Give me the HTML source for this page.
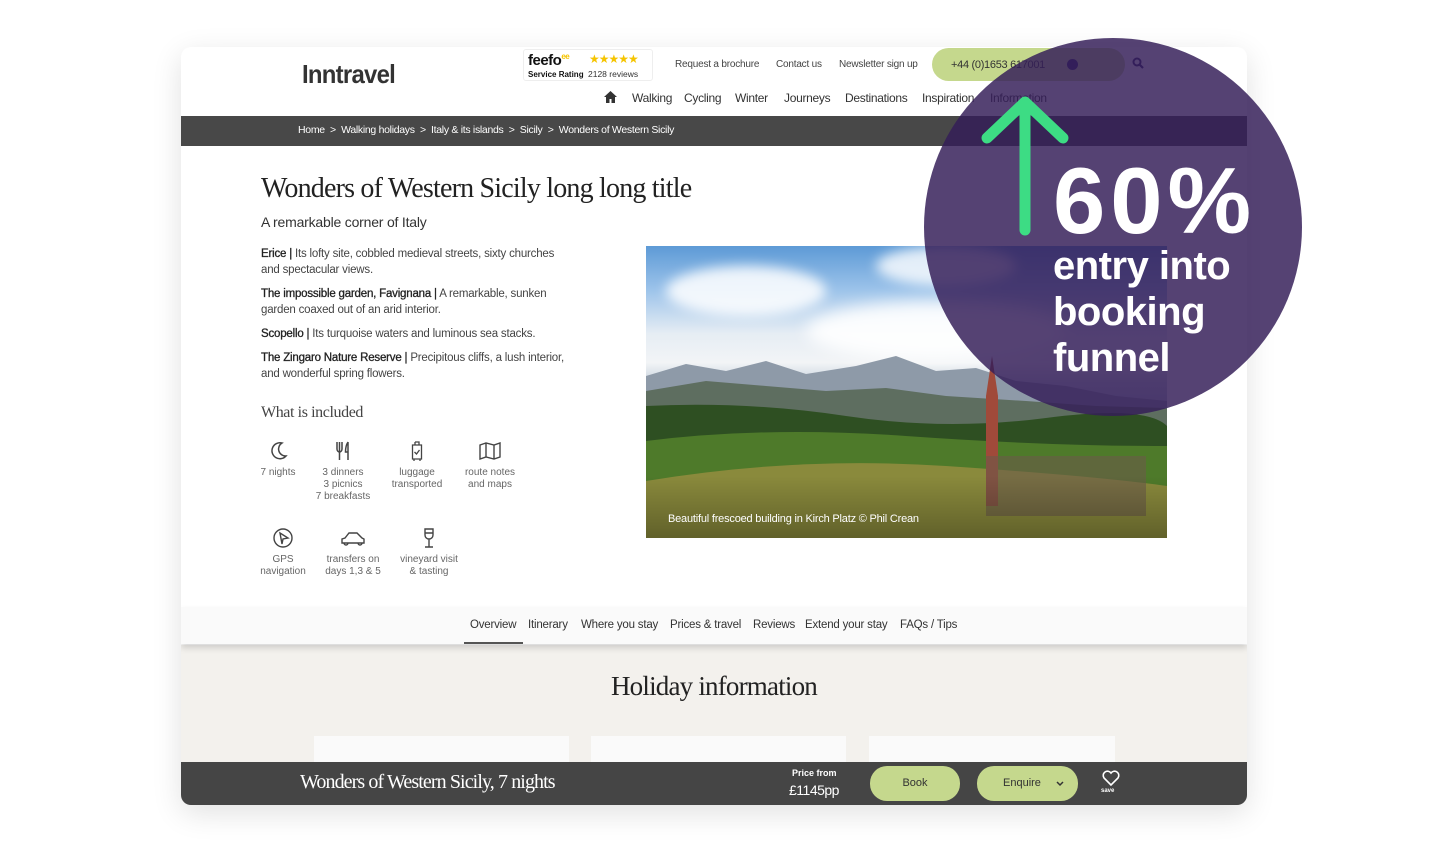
<!DOCTYPE html>
<html><head><meta charset="utf-8"><style>
*{margin:0;padding:0;box-sizing:border-box}
body{width:1429px;height:855px;background:#fff;position:relative;overflow:hidden;font-family:"Liberation Sans",sans-serif;color:#333}
.a{position:absolute}
.card{left:181px;top:47px;width:1066px;height:758px;background:#fff;border-radius:10px;box-shadow:0 8px 30px rgba(0,0,0,0.12);overflow:hidden}
.serif{font-family:"Liberation Serif",serif}
.nav{font-size:12px;color:#333}
.ic{text-align:center;font-size:10px;color:#666;line-height:12px}
.ic svg{display:block;margin:0 auto 5px}
p.t{font-size:11.5px;line-height:16px;color:#444;margin-bottom:8px;letter-spacing:-0.2px}
p.t b{color:#222;font-weight:normal;-webkit-text-stroke:0.3px #222}
.tab{font-size:11.5px;color:#333;letter-spacing:-0.2px}
</style></head><body>
<div class="a card">
 <div class="a" style="left:0;top:598px;width:1066px;height:160px;background:#f3f1ed"></div>
 <div class="a" style="left:121px;top:12px;font-size:26px;font-weight:bold;color:#333;letter-spacing:-0.8px;transform:scaleX(0.92);transform-origin:left">Inntravel</div>
 <div class="a" style="left:342px;top:2px;width:130px;height:32px;border:1px solid #eee;border-radius:3px;background:#fff">
  <div class="a" style="left:4px;top:2px;font-size:15px;font-weight:bold;color:#111;letter-spacing:-0.5px">feefo<span style="color:#f5c400;font-size:8px;vertical-align:top">ee</span></div>
  <div class="a" style="left:65px;top:2px;font-size:12px;color:#f5c400;letter-spacing:-1px">★★★★★</div>
  <div class="a" style="left:4px;top:20px;font-size:8px;font-weight:bold;color:#111">Service Rating</div>
  <div class="a" style="left:64px;top:19px;font-size:8.5px;color:#333">2128 reviews</div>
 </div>
 <div class="a" style="left:494px;top:12px;font-size:10px;color:#444;letter-spacing:-0.2px">Request a brochure</div>
 <div class="a" style="left:595px;top:12px;font-size:10px;color:#444;letter-spacing:-0.2px">Contact us</div>
 <div class="a" style="left:658px;top:12px;font-size:10px;color:#444;letter-spacing:-0.2px">Newsletter sign up</div>
 <div class="a" style="left:751px;top:1px;width:193px;height:33px;border-radius:17px;background:#c5d88d"></div>
 <div class="a" style="left:770px;top:12px;font-size:11px;color:#333;letter-spacing:-0.3px">+44 (0)1653 617001</div>
 <div class="a" style="left:886px;top:12px;width:11px;height:11px;border-radius:50%;background:#2c2366"></div>
 <svg class="a" style="left:951px;top:10px" width="12" height="12" viewBox="0 0 12 12"><circle cx="5" cy="5" r="3.5" fill="none" stroke="#2c2366" stroke-width="2"/><path d="M7.5 7.5L11 11" stroke="#2c2366" stroke-width="2.2"/></svg>
 <svg class="a" style="left:423px;top:44px" width="13" height="12" viewBox="0 0 13 12"><path d="M6.5 0L0 6h2v6h3.5V8h2v4H11V6h2z" fill="#333"/></svg>
 <div class="a nav" style="left:451px;top:44px;letter-spacing:-0.3px">Walking</div>
 <div class="a nav" style="left:503px;top:44px;letter-spacing:-0.3px">Cycling</div>
 <div class="a nav" style="left:554px;top:44px;letter-spacing:-0.3px">Winter</div>
 <div class="a nav" style="left:603px;top:44px;letter-spacing:-0.3px">Journeys</div>
 <div class="a nav" style="left:664px;top:44px;letter-spacing:-0.3px">Destinations</div>
 <div class="a nav" style="left:741px;top:44px;letter-spacing:-0.3px">Inspiration</div>
 <div class="a nav" style="left:809px;top:44px;letter-spacing:-0.3px">Information</div>
 <div class="a" style="left:0;top:69px;width:1066px;height:30px;background:#484848"></div>
 <div class="a" style="left:117px;top:77px;font-size:10.5px;color:#fff;letter-spacing:-0.3px">Home &nbsp;&gt;&nbsp; Walking holidays &nbsp;&gt;&nbsp; Italy &amp; its islands &nbsp;&gt;&nbsp; Sicily &nbsp;&gt;&nbsp; Wonders of Western Sicily</div>

 <div class="a serif" style="left:80px;top:126px;font-size:28px;color:#222;letter-spacing:-0.8px">Wonders of Western Sicily long long title</div>
 <div class="a" style="left:80px;top:167px;font-size:14px;color:#333;letter-spacing:-0.2px">A remarkable corner of Italy</div>
 <div class="a" style="left:80px;top:199px;width:310px">
  <p class="t"><b>Erice |</b> Its lofty site, cobbled medieval streets, sixty churches and spectacular views.</p>
  <p class="t"><b>The impossible garden, Favignana |</b> A remarkable, sunken garden coaxed out of an arid interior.</p>
  <p class="t"><b>Scopello |</b> Its turquoise waters and luminous sea stacks.</p>
  <p class="t"><b>The Zingaro Nature Reserve |</b> Precipitous cliffs, a lush interior, and wonderful spring flowers.</p>
 </div>
 <div class="a serif" style="left:80px;top:357px;font-size:16px;color:#444;letter-spacing:-0.4px">What is included</div>
 <div class="a ic" style="left:70px;top:393px;width:54px"><svg width="22" height="22" viewBox="0 0 22 22"><path d="M15 3A8 8 0 1 0 19 16A7 7 0 0 1 15 3z" fill="none" stroke="#444" stroke-width="1.5"/></svg>7 nights</div>
 <div class="a ic" style="left:130px;top:393px;width:64px"><svg width="22" height="22" viewBox="0 0 22 22"><path d="M5 2v7c0 2 1.5 3 2.5 3M10 2v7c0 2-1.5 3-2.5 3M7.5 2v18M7.5 12v8M16 2c-2 3-2.5 6-2.5 10H16v8M16 2v10" fill="none" stroke="#444" stroke-width="1.5"/></svg>3 dinners<br>3 picnics<br>7 breakfasts</div>
 <div class="a ic" style="left:205px;top:393px;width:62px"><svg width="22" height="22" viewBox="0 0 22 22"><path d="M9 2h4v3M9 2v3M6.5 5h9v14h-9zM8 19v2M14 19v2M8.5 12l2 2 3-4" fill="none" stroke="#444" stroke-width="1.3"/></svg>luggage<br>transported</div>
 <div class="a ic" style="left:278px;top:393px;width:62px"><svg width="24" height="22" viewBox="0 0 24 22"><path d="M2 5l6-2 8 2 6-2v14l-6 2-8-2-6 2zM8 3v14M16 5v14" fill="none" stroke="#444" stroke-width="1.4"/></svg>route notes<br>and maps</div>
 <div class="a ic" style="left:70px;top:480px;width:64px"><svg width="22" height="22" viewBox="0 0 22 22"><circle cx="11" cy="11" r="9" fill="none" stroke="#444" stroke-width="1.4"/><path d="M8 6l8 5-5 1-1 5z" fill="none" stroke="#444" stroke-width="1.4"/></svg>GPS<br>navigation</div>
 <div class="a ic" style="left:140px;top:480px;width:64px"><svg width="28" height="22" viewBox="0 0 28 22"><path d="M3 16v-4l3-1 4-5h8l5 5 2 1v4zM5 16a2 2 0 1 0 4 0M19 16a2 2 0 1 0 4 0" fill="none" stroke="#444" stroke-width="1.4"/></svg>transfers on<br>days 1,3 &amp; 5</div>
 <div class="a ic" style="left:215px;top:480px;width:66px"><svg width="22" height="22" viewBox="0 0 22 22"><path d="M7 2h8v6a4 4 0 0 1-8 0zM7 6h8M11 12v8M7 20h8" fill="none" stroke="#444" stroke-width="1.4"/></svg>vineyard visit<br>&amp; tasting</div>

 <div class="a" style="left:465px;top:199px;width:521px;height:292px;overflow:hidden;background:linear-gradient(180deg,#5d9ad6 0%,#9cc3ea 15%,#e6edf4 30%,#f2f4f6 40%,#c8d3de 47%,#b0c0d0 55%)">
  <div class="a" style="left:20px;top:20px;width:160px;height:50px;border-radius:50%;background:rgba(255,255,255,0.85);filter:blur(6px)"></div>
  <div class="a" style="left:230px;top:0px;width:140px;height:40px;border-radius:50%;background:rgba(255,255,255,0.8);filter:blur(6px)"></div>
  <div class="a" style="left:160px;top:55px;width:260px;height:60px;border-radius:50%;background:rgba(255,255,255,0.9);filter:blur(8px)"></div>
  <svg class="a" style="left:0;top:100px" width="521" height="192" viewBox="0 0 521 192">
   <path d="M0 30L40 18 80 25 120 15 160 28 210 20 250 10 290 25 330 22 370 35 420 40 470 50 521 55V192H0z" fill="#8e9aa8"/>
   <path d="M0 45L60 35 120 40 180 45 240 42 300 50 380 55 450 60 521 62V192H0z" fill="#5e6e60"/>
   <path d="M0 60Q100 55 200 70T400 72T521 80V192H0z" fill="#2e4f22"/>
   <path d="M0 95Q120 80 260 90T521 100V192H0z" fill="#4e7a2a"/>
   <path d="M0 135Q150 110 300 120T521 140V192H0z" fill="#8a8a3c"/>
   <path d="M340 50L346 10 352 50V160H340z" fill="#a04a3a"/>
   <path d="M340 110h160v60H340z" fill="#6a5a4a" opacity="0.6"/>
  </svg>
  <div class="a" style="left:0;top:230px;width:521px;height:62px;background:linear-gradient(180deg,rgba(0,0,0,0),rgba(0,0,0,0.3))"></div>
  <div class="a" style="left:22px;top:267px;font-size:11px;color:#fff;letter-spacing:-0.2px">Beautiful frescoed building in Kirch Platz © Phil Crean</div>
 </div>
 <div class="a" style="left:0;top:560px;width:1066px;height:37px;background:#fafafa;box-shadow:0 4px 6px rgba(0,0,0,0.15)"></div>
 <div class="a tab" style="left:289px;top:572px">Overview</div>
 <div class="a" style="left:283px;top:595px;width:59px;height:2px;background:#555"></div>
 <div class="a tab" style="left:347px;top:572px">Itinerary</div>
 <div class="a tab" style="left:400px;top:572px">Where you stay</div>
 <div class="a tab" style="left:489px;top:572px">Prices &amp; travel</div>
 <div class="a tab" style="left:572px;top:572px">Reviews</div>
 <div class="a tab" style="left:624px;top:572px">Extend your stay</div>
 <div class="a tab" style="left:719px;top:572px">FAQs / Tips</div>
 <div class="a serif" style="left:0;top:624px;width:1066px;text-align:center;font-size:27px;color:#222;letter-spacing:-0.8px">Holiday information</div>
 <div class="a" style="left:133px;top:689px;width:255px;height:40px;background:#fafafa"></div>
 <div class="a" style="left:410px;top:689px;width:255px;height:40px;background:#fafafa"></div>
 <div class="a" style="left:688px;top:689px;width:246px;height:40px;background:#fafafa"></div>
 <div class="a" style="left:0;top:715px;width:1066px;height:43px;background:#454545"></div>
 <div class="a serif" style="left:119px;top:724px;font-size:20px;color:#fff;letter-spacing:-0.9px">Wonders of Western Sicily, 7 nights</div>
 <div class="a" style="left:611px;top:721px;font-size:9px;font-weight:bold;color:#fff">Price from</div>
 <div class="a" style="left:608px;top:735px;font-size:14px;color:#fff;letter-spacing:-0.5px">£1145pp</div>
 <div class="a" style="left:689px;top:719px;width:90px;height:35px;border-radius:17px;background:#c5d88d;text-align:center;line-height:35px;font-size:11px;color:#333">Book</div>
 <div class="a" style="left:796px;top:719px;width:101px;height:35px;border-radius:17px;background:#c5d88d;font-size:11px;color:#333;line-height:35px;padding-left:26px">Enquire</div>
 <svg class="a" style="left:875px;top:734px" width="8" height="6" viewBox="0 0 8 6"><path d="M1 1l3 3 3-3" fill="none" stroke="#333" stroke-width="1.5"/></svg>
 <svg class="a" style="left:921px;top:723px" width="18" height="17" viewBox="0 0 18 17"><path d="M9 15L2 8a4 4 0 0 1 7-5 4 4 0 0 1 7 5z" fill="none" stroke="#fff" stroke-width="1.6"/></svg>
 <div class="a" style="left:920px;top:741px;font-size:6px;font-weight:bold;color:#fff">save</div>
</div>
<div class="a" style="left:924px;top:38px;width:378px;height:378px;border-radius:50%;background:rgba(52,30,88,0.84)"></div>
<svg class="a" style="left:975px;top:92px" width="100" height="145" viewBox="0 0 100 145"><path d="M50 138V10M12 46L50 10l38 36" fill="none" stroke="#3ddc84" stroke-width="11" stroke-linecap="round" stroke-linejoin="round"/></svg>
<div class="a" style="left:1053px;top:146px;font-size:94px;font-weight:bold;color:#fff;letter-spacing:5px;line-height:110px">60%</div>
<div class="a" style="left:1053px;top:243px;font-size:40px;font-weight:bold;color:#fff;line-height:46px;letter-spacing:-0.5px">entry into<br>booking<br>funnel</div>
</body></html>
